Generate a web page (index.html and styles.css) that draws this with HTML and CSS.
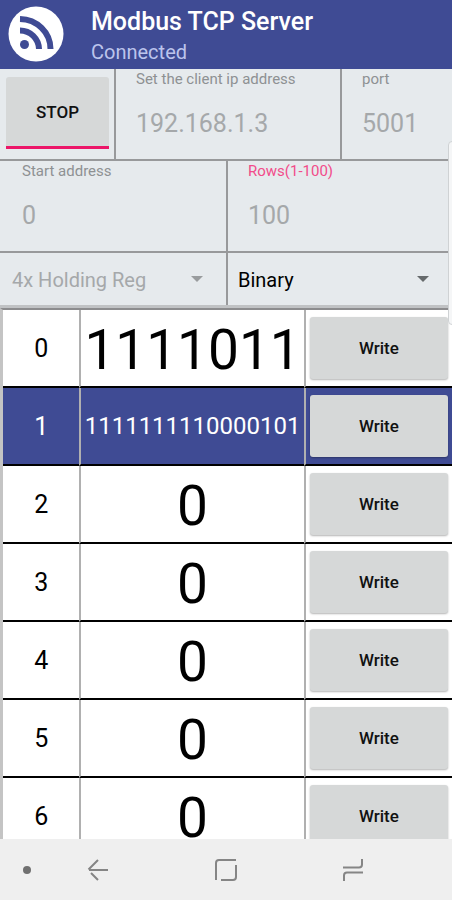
FILE: index.html
```html
<!DOCTYPE html>
<html lang="en">
<head>
    <meta charset="UTF-8">
    <meta name="viewport" content="width=device-width, initial-scale=1.0">
    <title>Modbus TCP Server</title>
    <link rel="stylesheet" href="styles.css">
</head>
<body>
    <header class="topbar">
        <svg class="logo" viewBox="0 0 56 56" aria-hidden="true">
            <circle cx="28" cy="28" r="27.5" fill="#fff"/>
            <circle cx="16.500" cy="38.500" r="4.500" fill="#3f4b94"/>
            <path d="M12 24.500a19 19 0 0 1 19 18.500M12 13a31 30 0 0 1 30.500 30" fill="none" stroke="#3f4b94" stroke-width="6"/>
        </svg>
        <div class="titles">
            <h1>Modbus TCP Server</h1>
            <p>Connected</p>
        </div>
    </header>

    <form class="settings">
        <div class="line connection">
            <div class="cell stop-cell">
                <button type="button" class="stop">STOP</button>
            </div>
            <div class="cell field">
                <label for="ip">Set the client ip address</label>
                <input id="ip" type="text" value="192.168.1.3" disabled>
            </div>
            <div class="cell field">
                <label for="port">port</label>
                <input id="port" type="text" value="5001" disabled>
            </div>
        </div>
        <div class="line range">
            <div class="cell field">
                <label for="start">Start address</label>
                <input id="start" type="text" value="0" disabled>
            </div>
            <div class="cell field">
                <label for="rows" class="active">Rows(1-100)</label>
                <input id="rows" type="text" value="100" disabled>
            </div>
        </div>
        <div class="line types">
            <div class="cell">
                <select aria-label="Register type" disabled>
                    <option>4x Holding Reg</option>
                </select>
            </div>
            <div class="cell">
                <select aria-label="Number format">
                    <option>Binary</option>
                </select>
            </div>
        </div>
        <div class="edge-panel"></div>
    </form>

    <main class="registers">
        <table>
            <tbody>
                <tr>
                    <td class="address">0</td>
                    <td class="value">1111011</td>
                    <td class="action"><button type="button">Write</button></td>
                </tr>
                <tr class="selected">
                    <td class="address">1</td>
                    <td class="value long">1111111110000101</td>
                    <td class="action"><button type="button">Write</button></td>
                </tr>
                <tr>
                    <td class="address">2</td>
                    <td class="value">0</td>
                    <td class="action"><button type="button">Write</button></td>
                </tr>
                <tr>
                    <td class="address">3</td>
                    <td class="value">0</td>
                    <td class="action"><button type="button">Write</button></td>
                </tr>
                <tr>
                    <td class="address">4</td>
                    <td class="value">0</td>
                    <td class="action"><button type="button">Write</button></td>
                </tr>
                <tr>
                    <td class="address">5</td>
                    <td class="value">0</td>
                    <td class="action"><button type="button">Write</button></td>
                </tr>
                <tr>
                    <td class="address">6</td>
                    <td class="value">0</td>
                    <td class="action"><button type="button">Write</button></td>
                </tr>
            </tbody>
        </table>
    </main>

    <nav class="navbar">
        <button type="button" class="dot" aria-label="Hide bar">
            <svg viewBox="0 0 24 24"><circle cx="12" cy="12" r="4" fill="#707070"/></svg>
        </button>
        <div class="keys">
            <button type="button" aria-label="Back">
                <svg viewBox="0 0 24 24"><path d="M22 12H3M12 2L2.500 11.500M5 15l7 7"/></svg>
            </button>
            <button type="button" aria-label="Home">
                <svg viewBox="0 0 24 24"><path d="M2 22V5q0-3 3-3H22M22 7V19q0 3-3 3H7"/></svg>
            </button>
            <button type="button" aria-label="Recent apps">
                <svg viewBox="0 0 24 24"><path d="M2 9.500H18q3 0 3-3V1M22 14.500H6q-3 0-3 3V23"/></svg>
            </button>
        </div>
    </nav>
</body>
</html>
```
FILE: styles.css
```css
* {
    box-sizing: border-box;
}

body {
    margin: 0;
    height: 100vh;
    display: flex;
    flex-direction: column;
    overflow: hidden;
    font-family: Roboto, "Liberation Sans", sans-serif;
    background: #fff;
    color: #000;
}

button, input, select {
    font-family: inherit;
}

/* Header */
.topbar {
    display: flex;
    align-items: center;
    gap: 27px;
    padding: 2px 8px 3px;
    background: #3f4b94;
}

.logo {
    width: 56px;
    height: 56px;
}

.titles {
    padding-top: 4px;
}

.titles h1 {
    margin: 0;
    font-size: 25px;
    line-height: 32px;
    font-weight: 500;
    color: #fff;
}

.titles p {
    margin: 0;
    font-size: 20px;
    line-height: 28px;
    color: #bcc4ec;
}

/* Settings */
.settings {
    position: relative;
    background: #e6eaed;
    border-bottom: 3px solid #c0c2c4;
}

.line {
    display: grid;
    border-bottom: 2px solid #98999b;
}

.types {
    border-bottom: 0;
}

.connection {
    grid-template-columns: 114fr 226fr 112fr;
}

.range, .types {
    grid-template-columns: 1fr 1fr;
}

.cell + .cell {
    border-left: 2px solid #98999b;
}

.stop-cell {
    padding: 8px 5px 10px 6px;
}

.stop {
    width: 100%;
    height: 72px;
    border: 0;
    border-bottom: 3px solid #ec1668;
    border-radius: 3px 3px 0 0;
    background: #d6d8d8;
    font-size: 17px;
    font-weight: 500;
    color: #111;
}

.field {
    display: flex;
    flex-direction: column;
    gap: 14px;
    padding: 0 20px 16px;
}

.range .field:first-child {
    padding-left: 22px;
}

.field label {
    font-size: 15px;
    line-height: 20px;
    white-space: nowrap;
    color: #8e9193;
}

.field label.active {
    color: #f24c8a;
}

.field input {
    width: 100%;
    height: 40px;
    padding: 0;
    border: 0;
    background: none;
    font-size: 25px;
    color: #a5a8aa;
}

select {
    appearance: none;
    width: 100%;
    height: 52px;
    padding: 2px 10px 0;
    border: 0;
    background: none;
    font-size: 20px;
    color: #000;
    opacity: 1;
}

select:disabled {
    color: #a5a8aa;
    opacity: 1;
}

.types .cell {
    display: flex;
    align-items: center;
    padding-right: 23px;
}

.types .cell:first-child {
    padding-left: 2px;
}

.types .cell::after {
    content: "";
    flex: none;
    border: 6px solid transparent;
    border-top-color: #666a6c;
    border-bottom: 0;
}

.types .cell:first-child::after {
    border-top-color: #999c9e;
}

/* Handle lying over the right edge of the screen */
.edge-panel {
    position: absolute;
    right: -4px;
    top: 72px;
    width: 8px;
    height: 184px;
    border: 1px solid #cfd2d4;
    border-radius: 4px;
    background: #f5f6f7;
    clip-path: inset(0 4px 0 0);
}

/* Register table */
.registers {
    flex: 1;
    min-height: 0;
    overflow: hidden;
    border-top: 2px solid #8c8c8e;
    border-left: 3px solid #c4c4c4;
}

table {
    width: 100%;
    table-layout: fixed;
    border-collapse: separate;
    border-spacing: 0;
}

td {
    height: 78px;
    padding: 0;
    text-align: center;
    border-bottom: 2px solid #000;
}

td + td {
    border-left: 2px solid #b0b0b0;
}

.address {
    width: 17%;
    font-size: 25px;
}

.value {
    width: 50%;
    padding-top: 4px;
    font-size: 55px;
    line-height: 60px;
}

.value.long {
    padding-top: 0;
    font-size: 24px;
}

.action {
    padding: 0 4px;
}

.action button {
    display: block;
    width: 100%;
    height: 62px;
    border: 0;
    border-radius: 3px;
    background: #d6d8d8;
    box-shadow: 0 1px 2px rgba(0, 0, 0, 0.3);
    font-size: 17px;
    font-weight: 500;
    color: #111;
}

.selected td {
    background: #3f4b94;
    color: #fff;
}

/* Navigation bar */
.navbar {
    display: flex;
    align-items: center;
    gap: 45px;
    height: 61px;
    padding: 0 86px 0 14px;
    background: #efefef;
}

.keys {
    flex: 1;
    display: flex;
    justify-content: space-between;
}

.navbar button {
    width: 26px;
    height: 26px;
    padding: 1px;
    border: 0;
    background: none;
}

.navbar svg {
    display: block;
    width: 24px;
    height: 24px;
    fill: none;
    stroke: #858585;
    stroke-width: 2;
}

.navbar .dot svg {
    stroke: none;
}
```
